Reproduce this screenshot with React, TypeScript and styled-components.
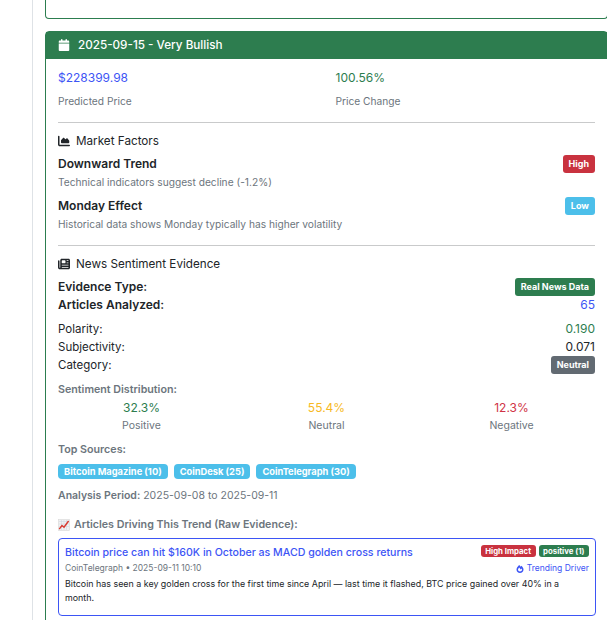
import React from "react"
import styled, { createGlobalStyle } from "styled-components"
import { FaCalendar, FaChartArea, FaNewspaper } from "react-icons/fa6"
import { FaFireAlt } from "react-icons/fa"

const GlobalStyle = createGlobalStyle`
  html, body {
    margin: 0;
    padding: 0;
    background: #fff;
    overflow: hidden;
  }
  body {
    font-family: Inter, "Liberation Sans", sans-serif;
    color: #212529;
    font-size: 12px;
    line-height: 18px;
  }
`

const Page = styled.div`
  width: 575px;
  height: 620px;
  overflow: hidden;
  box-sizing: border-box;
  margin-left: 32px;
  padding-left: 12px;
  border-left: 1px solid #dee2e6;
`
const PrevCard = styled.div`
  box-sizing: border-box;
  width: 563px;
  height: 19px;
  border: 1px solid #2c7d4f;
  border-top: 0;
  border-radius: 0 0 4px 4px;
  margin-bottom: 12px;
`
const Card = styled.div`
  box-sizing: border-box;
  width: 563px;
  border: 1px solid #2c7d4f;
  border-radius: 4px;
`
const CardHeader = styled.div`
  box-sizing: border-box;
  display: flex;
  align-items: center;
  gap: 8px;
  height: 27px;
  padding: 0 12px 2px;
  background: #2d7d4f;
  color: #fff;
  font-size: 11.7px;
  font-weight: 500;
`
const CardBody = styled.div`
  padding: 10px 12px 12px;
`
const TwoCols = styled.div`
  display: grid;
  grid-template-columns: 1fr 1fr;
  column-gap: 18px;
`
const Price = styled.div<{ $color: string }>`
  color: ${props => props.$color};
  font-size: 12px;
  line-height: 18px;
`
const Caption = styled.div`
  margin-top: 5px;
  margin-bottom: 1px;
  color: #6c757d;
  font-size: 10.2px;
  line-height: 18px;
`
const Rule = styled.hr`
  margin: 11px 0 9px;
  border: 0;
  border-top: 1px solid #c9cacb;
`
const SectionTitle = styled.div`
  display: flex;
  align-items: center;
  gap: 6px;
  font-size: 11.7px;
  line-height: 18px;
  margin-bottom: 5px;
`
const FactorList = styled.div`
  margin-bottom: 12px;
`
const Factor = styled.div`
  margin-bottom: 6px;
`
const SpaceRow = styled.div`
  display: flex;
  justify-content: space-between;
  align-items: center;
  height: 18px;
`
const Strong = styled.span`
  font-weight: 600;
`
const RowLabel = styled.span`
  font-size: 11.5px;
`
const FactorNote = styled.div`
  color: #6c757d;
  font-size: 10.2px;
  line-height: 18px;
`
const Badge = styled.span<{ $bg: string }>`
  display: inline-block;
  padding: 3px 6px;
  border-radius: 3px;
  background: ${props => props.$bg};
  color: #fff;
  font-size: 9px;
  font-weight: 700;
  line-height: 12px;
  white-space: nowrap;
`
const Group = styled.div`
  margin-bottom: 6px;
`
const LastGroup = styled.div`
  margin-bottom: 7px;
`
const Value = styled.span<{ $color?: string }>`
  color: ${props => props.$color || "#212529"};
`
const MutedHeading = styled.div`
  color: #6c757d;
  font-size: 10.7px;
  font-weight: 600;
  line-height: 18px;
`
const ThreeCols = styled.div`
  display: grid;
  grid-template-columns: repeat(3, 1fr);
  column-gap: 18px;
  text-align: center;
  margin-bottom: 6px;
`
const Percent = styled.div<{ $color: string }>`
  color: ${props => props.$color};
  font-size: 12px;
  line-height: 18px;
`
const PercentLabel = styled.div`
  color: #6c757d;
  font-size: 10.5px;
  line-height: 18px;
`
const Sources = styled.div`
  display: flex;
  gap: 6px;
  margin-top: 5px;
  margin-bottom: 8px;
`
const SourceBadge = styled(Badge)`
  padding: 1.5px 6px;
  font-size: 9.3px;
  border-radius: 4px;
`
const Period = styled.div`
  color: #6c757d;
  font-size: 10.5px;
  line-height: 18px;
  margin-bottom: 11px;
`
const DrivingHeading = styled(MutedHeading)`
  display: flex;
  align-items: center;
  gap: 4px;
  margin-bottom: 4px;
`
const Article = styled.div`
  box-sizing: border-box;
  width: 538px;
  height: 78px;
  padding: 5px 6px;
  border: 1px solid #3d55f5;
  border-radius: 4px;
`
const ArticleTop = styled.div`
  display: flex;
  justify-content: space-between;
  align-items: flex-start;
`
const ArticleTitle = styled.div`
  color: #3d55f5;
  font-size: 10.6px;
  line-height: 18px;
  font-weight: 500;
`
const Badges = styled.div`
  display: flex;
  gap: 3px;
  margin-top: 1px;
`
const SmallBadge = styled(Badge)`
  padding: 0 4.5px;
  font-size: 7.8px;
  border-radius: 3px;
`
const Meta = styled.div`
  color: #6c757d;
  font-size: 8.5px;
  line-height: 13px;
`
const Trending = styled.div`
  display: flex;
  align-items: center;
  gap: 3px;
  color: #3d55f5;
  font-size: 8.5px;
  line-height: 13px;
`
const Summary = styled.div`
  margin-top: 2px;
  font-size: 8.9px;
  line-height: 14px;
  color: #212529;
`

const ChartEmoji = () => (
  <svg width="12" height="12" viewBox="0 0 12 12">
    <rect x="0.5" y="0.5" width="11" height="11" fill="#f1f1f1" stroke="#d8d8d8" strokeWidth="0.6" />
    <path d="M1 2.5H11M1 5H11M1 7.5H11M3.5 1V11M6 1V11M8.5 1V11" stroke="#c9d3de" strokeWidth="0.5" />
    <path d="M1.2 10.2L4 6.5L6 8.2L10.6 2" fill="none" stroke="#d8392f" strokeWidth="1.4" />
  </svg>
)

const factors = [
  { name: "Downward Trend", level: "High", bg: "#c9323f", note: "Technical indicators suggest decline (-1.2%)" },
  { name: "Monday Effect", level: "Low", bg: "#4cbfea", note: "Historical data shows Monday typically has higher volatility" },
]

const distribution = [
  { value: "32.3%", label: "Positive", color: "#2d7d4f" },
  { value: "55.4%", label: "Neutral", color: "#f7b924" },
  { value: "12.3%", label: "Negative", color: "#d03346" },
]

const sources = ["Bitcoin Magazine (10)", "CoinDesk (25)", "CoinTelegraph (30)"]

const App = () => (
  <Page>
    <GlobalStyle />
    <PrevCard />
    <Card>
      <CardHeader>
        <FaCalendar size={12} />
        2025-09-15 - Very Bullish
      </CardHeader>
      <CardBody>
        <TwoCols>
          <div>
            <Price $color="#3d55f5">$228399.98</Price>
            <Caption>Predicted Price</Caption>
          </div>
          <div>
            <Price $color="#2d7d4f">100.56%</Price>
            <Caption>Price Change</Caption>
          </div>
        </TwoCols>
        <Rule />
        <SectionTitle>
          <FaChartArea size={12} />
          Market Factors
        </SectionTitle>
        <FactorList>
          {factors.map(f => (
            <Factor key={f.name}>
              <SpaceRow>
                <Strong>{f.name}</Strong>
                <Badge $bg={f.bg}>{f.level}</Badge>
              </SpaceRow>
              <FactorNote>{f.note}</FactorNote>
            </Factor>
          ))}
        </FactorList>
        <Rule />
        <SectionTitle>
          <FaNewspaper size={12} />
          News Sentiment Evidence
        </SectionTitle>
        <Group>
          <SpaceRow>
            <Strong>Evidence Type:</Strong>
            <Badge $bg="#2d7d4f">Real News Data</Badge>
          </SpaceRow>
          <SpaceRow>
            <Strong>Articles Analyzed:</Strong>
            <Value $color="#3d55f5">65</Value>
          </SpaceRow>
        </Group>
        <LastGroup>
          <SpaceRow>
            <RowLabel>Polarity:</RowLabel>
            <Value $color="#2d7d4f">0.190</Value>
          </SpaceRow>
          <SpaceRow>
            <RowLabel>Subjectivity:</RowLabel>
            <Value>0.071</Value>
          </SpaceRow>
          <SpaceRow>
            <RowLabel>Category:</RowLabel>
            <Badge $bg="#626a72">Neutral</Badge>
          </SpaceRow>
        </LastGroup>
        <MutedHeading>Sentiment Distribution:</MutedHeading>
        <ThreeCols>
          {distribution.map(d => (
            <div key={d.label}>
              <Percent $color={d.color}>{d.value}</Percent>
              <PercentLabel>{d.label}</PercentLabel>
            </div>
          ))}
        </ThreeCols>
        <MutedHeading>Top Sources:</MutedHeading>
        <Sources>
          {sources.map(s => (
            <SourceBadge key={s} $bg="#4cbfea">{s}</SourceBadge>
          ))}
        </Sources>
        <Period>
          <Strong>Analysis Period:</Strong> 2025-09-08 to 2025-09-11
        </Period>
        <DrivingHeading>
          <ChartEmoji />
          Articles Driving This Trend (Raw Evidence):
        </DrivingHeading>
        <Article>
          <ArticleTop>
            <ArticleTitle>Bitcoin price can hit $160K in October as MACD golden cross returns</ArticleTitle>
            <Badges>
              <SmallBadge $bg="#c9323f">High Impact</SmallBadge>
              <SmallBadge $bg="#2d7d4f">positive (1)</SmallBadge>
            </Badges>
          </ArticleTop>
          <ArticleTop>
            <Meta>CoinTelegraph • 2025-09-11 10:10</Meta>
            <Trending>
              <FaFireAlt size={8} />
              Trending Driver
            </Trending>
          </ArticleTop>
          <Summary>
            Bitcoin has seen a key golden cross for the first time since April — last time it flashed, BTC price gained over 40% in a month.
          </Summary>
        </Article>
      </CardBody>
    </Card>
  </Page>
)

export default App
